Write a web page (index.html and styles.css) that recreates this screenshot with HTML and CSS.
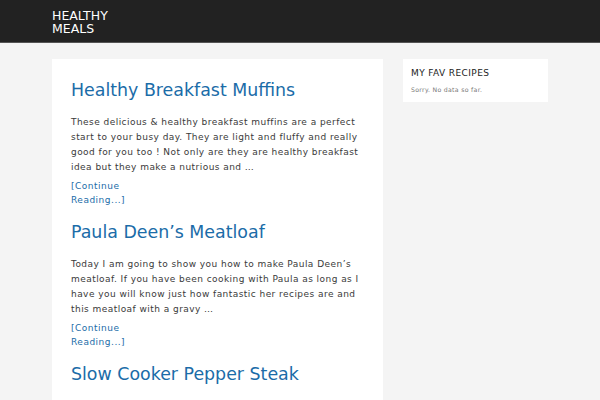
FILE: index.html
```html
<!DOCTYPE html>
<html lang="en">
<head>
  <meta charset="UTF-8" />
  <meta name="viewport" content="width=device-width, initial-scale=1.0" />
  <title>Healthy Meals</title>
  <link rel="stylesheet" href="styles.css">
</head>
<body>
  <header class="site-header">
    <div class="header-inner">
      <a class="site-title" href="#">Healthy<br>Meals</a>
    </div>
  </header>

  <div class="site-content">
    <main class="content-area">
      <article class="post">
        <h2 class="entry-title"><a href="#">Healthy Breakfast Muffins</a></h2>
        <p class="entry-summary">These delicious &amp; healthy breakfast muffins are a perfect start to your busy day. They are light and fluffy and really good for you too ! Not only are they are healthy breakfast idea but they make a nutrious and &hellip;</p>
        <a class="read-more" href="#">[Continue Reading...]</a>
      </article>
      <article class="post">
        <h2 class="entry-title"><a href="#">Paula Deen&rsquo;s Meatloaf</a></h2>
        <p class="entry-summary">Today I am going to show you how to make Paula Deen&rsquo;s meatloaf. If you have been cooking with Paula as long as I have you will know just how fantastic her recipes are and this meatloaf with a gravy &hellip;</p>
        <a class="read-more" href="#">[Continue Reading...]</a>
      </article>
      <article class="post">
        <h2 class="entry-title"><a href="#">Slow Cooker Pepper Steak</a></h2>
        <p class="entry-summary">A hearty slow cooker pepper steak that practically makes itself while you get on with your day &hellip;</p>
      </article>
    </main>

    <aside class="sidebar">
      <section class="widget">
        <h3 class="widget-title">My Fav Recipes</h3>
        <p class="widget-text">Sorry. No data so far.</p>
      </section>
    </aside>
  </div>
</body>
</html>
```

FILE: styles.css
```css
body {
  font-family: "DejaVu Sans", sans-serif;
  background-color: #f4f4f4;
  color: #3a3a3a;
  margin: 0;
}
a {
  color: #1b6ca8;
  text-decoration: none;
}
.site-header {
  background-color: #222;
  border-bottom: 1px solid #555;
  height: 42px;
}
.header-inner {
  padding: 10px 52px 0;
}
.site-title {
  display: inline-block;
  color: #fff;
  font-size: 12.5px;
  line-height: 12.5px;
  text-transform: uppercase;
}
.site-content {
  display: flex;
  align-items: flex-start;
  gap: 20px;
  padding: 16px 52px 0;
}
.content-area {
  width: 331px;
  background: #fff;
  padding: 20px 19px 0;
  box-sizing: border-box;
}
.post {
  padding-bottom: 14px;
}
.entry-title {
  font-size: 17.4px;
  font-weight: normal;
  line-height: 22px;
  margin: 0 0 14px;
}
.entry-summary {
  font-size: 9px;
  letter-spacing: 0.45px;
  line-height: 15px;
  margin: 0 0 4px;
}
.read-more {
  display: block;
  width: 70px;
  font-size: 9px;
  letter-spacing: 0.5px;
  line-height: 14px;
}
.sidebar {
  width: 145px;
}
.widget {
  background: #fff;
  padding: 9px 8px 9px;
}
.widget-title {
  font-size: 9px;
  font-weight: normal;
  letter-spacing: 0.4px;
  text-transform: uppercase;
  color: #222;
  margin: 0 0 8px;
}
.widget-text {
  font-size: 6.2px;
  color: #777;
  letter-spacing: 0.3px;
  margin: 0;
}
```
